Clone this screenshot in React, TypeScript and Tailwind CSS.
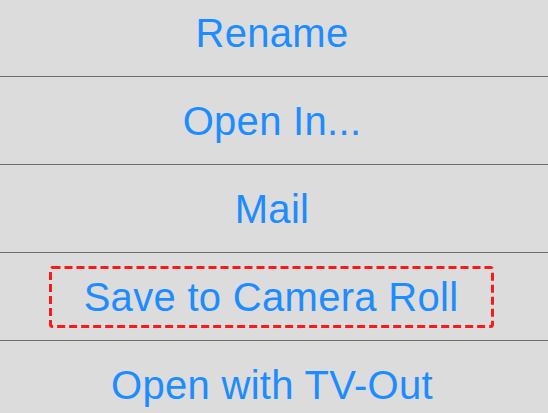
import React from "react";

const items = ["Rename", "Open In...", "Mail", "Save to Camera Roll", "Open with TV-Out"];

function DashedBox({ children }: { children: React.ReactNode }) {
  return (
    <div className="relative mr-[6px] flex h-[62px] w-[445px] items-center justify-center">
      {/* red dashed highlight */}
      <svg className="pointer-events-none absolute inset-0" width="445" height="62">
        <rect
          x="1.5"
          y="1.5"
          width="442"
          height="59"
          rx="2"
          fill="none"
          stroke="#f71b1b"
          strokeWidth="3"
          strokeDasharray="8 4"
        />
      </svg>
      {children}
    </div>
  );
}

export default function App() {
  return (
    <div
      className="h-[413px] w-[548px] overflow-hidden bg-[#dcdcdc]"
      style={{ fontFamily: '"Liberation Sans", Arial, sans-serif' }}
    >
      <div className="-mt-[11px] flex flex-col">
        {items.map((label, i) => (
          <React.Fragment key={label}>
            {i > 0 && <div className="h-px w-full bg-[#6e6e6e]" />}
            <div className="flex h-[87px] items-center justify-center">
              {label === "Save to Camera Roll" ? (
                <DashedBox>
                  <span className="text-[40px] leading-none tracking-[0.3px] text-[#1c8cff]">{label}</span>
                </DashedBox>
              ) : (
                <span className="mr-[4px] text-[40px] leading-none tracking-[0.3px] text-[#1c8cff]">
                  {label}
                </span>
              )}
            </div>
          </React.Fragment>
        ))}
      </div>
    </div>
  );
}
